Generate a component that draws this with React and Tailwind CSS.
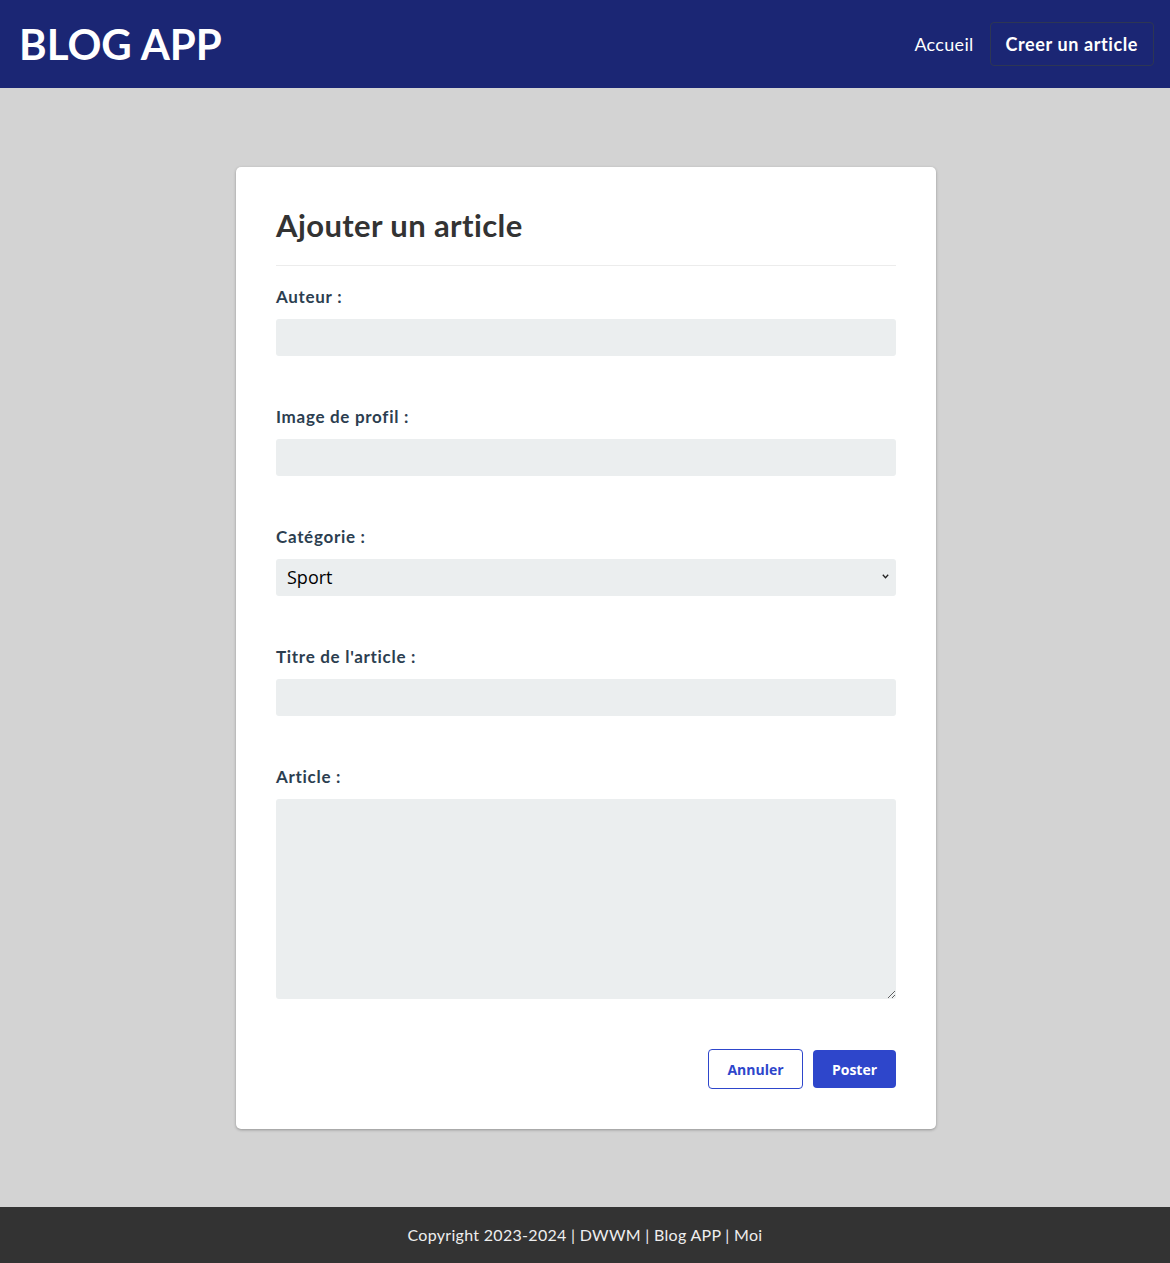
const FIELDS = [
  { label: 'Auteur :', type: 'text' },
  { label: 'Image de profil :', type: 'text' },
  { label: 'Catégorie :', type: 'select' },
  { label: "Titre de l'article :", type: 'text' },
  { label: 'Article :', type: 'textarea' },
];

const inputClass = 'w-full rounded-[3px] bg-[#ebeeef] outline-none border-0';

function Field({ label, type }) {
  return (
    <div className="mb-[49px] last:mb-0">
      <label className="block text-[17px] font-bold text-[#2c3e50] leading-[24px] mb-[10px] tracking-[0.7px]">{label}</label>
      {type === 'select' && (
        <div className="relative">
          <select
            defaultValue="Sport"
            className={`${inputClass} appearance-none h-[37px] px-[11px] text-[18px] text-black font-['Open_Sans',sans-serif] block`}
          >
            <option>Sport</option>
            <option>Culture</option>
            <option>Tech</option>
          </select>
          <svg className="absolute right-[7px] top-[15px] w-[7px] h-[5px] pointer-events-none" viewBox="0 0 7 5" fill="none">
            <path d="M0.8 0.8 L3.5 3.8 L6.2 0.8" stroke="#222" strokeWidth="1.3" />
          </svg>
        </div>
      )}
      {type === 'textarea' && <textarea className={`${inputClass} h-[200px] block p-2`} />}
      {type === 'text' && <input type="text" className={`${inputClass} h-[37px] px-2 block`} />}
    </div>
  );
}

export default function App() {
  return (
    <div className="min-h-[1263px] flex flex-col bg-[#d3d3d3] font-['Lato',sans-serif]">
      <header className="h-[88px] bg-[#1b2674] flex items-center justify-between pl-[19px] pr-[16px]">
        <h1 className="text-[42px] font-bold text-white">BLOG APP</h1>
        <nav className="flex items-center gap-[16px]">
          <a className="text-[18px] text-white tracking-[0.3px]">Accueil</a>
          <a className="h-[44px] px-[15px] flex items-center rounded-[4px] border border-[#2d3654] text-[18px] font-bold text-white tracking-[0.6px]">
            Creer un article
          </a>
        </nav>
      </header>

      <main className="flex-1 flex justify-center items-start pt-[79px] pb-[78px] pl-[2px]">
        <div className="w-[700px] bg-white rounded-[5px] shadow-[0_1px_3px_rgba(0,0,0,0.3)] px-[40px] pt-[36px] pb-[40px]">
          <h2 className="text-[31px] font-bold text-[#333] leading-[44px] pb-[18px] border-b border-[#ececec] mb-[19px] tracking-[0.4px]">
            Ajouter un article
          </h2>
          <form>
            {FIELDS.map((f) => (
              <Field key={f.label} {...f} />
            ))}
            <div className="flex justify-end gap-[10px] mt-[50px] font-['Open_Sans',sans-serif]">
              <button type="button" className="h-[40px] w-[95px] rounded-[4px] border border-[#2e46cb] text-[#2e46cb] text-[14px] font-bold bg-white">
                Annuler
              </button>
              <button type="button" className="h-[38px] mt-[1px] w-[83px] rounded-[4px] bg-[#2e46cb] text-white text-[14px] font-bold">
                Poster
              </button>
            </div>
          </form>
        </div>
      </main>

      <footer className="h-[56px] bg-[#333333] flex items-center justify-center text-[16px] text-[#eeeeee] tracking-[0.3px]">
        Copyright 2023-2024 | DWWM | Blog APP | Moi
      </footer>
    </div>
  );
}
